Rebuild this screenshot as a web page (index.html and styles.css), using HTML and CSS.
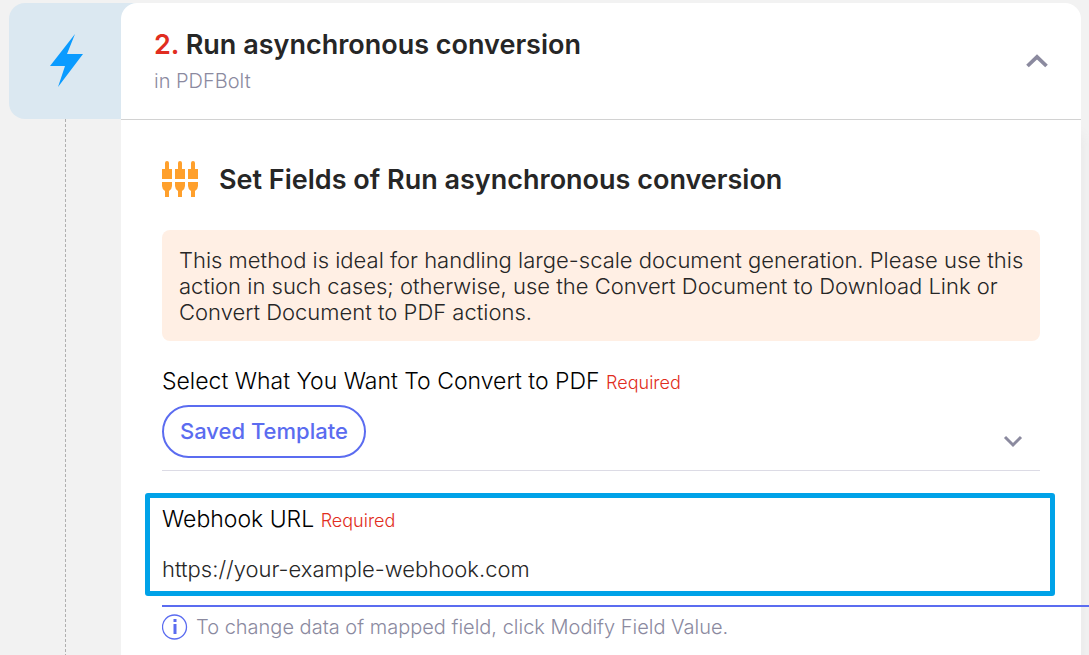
FILE: index.html
```html
<!DOCTYPE html>
<html lang="en">
<head>
  <meta charset="UTF-8">
  <meta name="viewport" content="width=device-width, initial-scale=1.0">
  <title>Run asynchronous conversion</title>
  <link rel="stylesheet" href="styles.css">
</head>
<body>
  <main class="step">
    <div class="rail">
      <div class="rail-icon">
        <svg width="34" height="54" viewBox="0 0 34 54" aria-hidden="true">
          <path d="M25 0 0 32h15L8 53 33 20H17z" fill="#0a9bff"/>
        </svg>
      </div>
      <div class="rail-line"></div>
    </div>

    <section class="card">
      <header class="card-header">
        <div>
          <h1 class="card-title"><span class="step-number">2.</span> Run asynchronous conversion</h1>
          <p class="card-subtitle">in PDFBolt</p>
        </div>
        <button class="icon-btn" type="button" aria-label="Collapse step">
          <svg width="22" height="14" viewBox="0 0 22 14" aria-hidden="true">
            <path d="M1.5 12 11 2.8 20.5 12" fill="none" stroke="#8b8a9f" stroke-width="3.8"/>
          </svg>
        </button>
      </header>

      <div class="card-body">
        <h2 class="section-title">
          <svg width="37" height="37" viewBox="0 0 37 37" fill="#ffa02c" aria-hidden="true">
            <path d="M0 8h3V2q0-2 2-2t2 2v6h3v10H0zM13 8h3V2q0-2 2-2t2 2v6h3v10H13zM26 8h3V2q0-2 2-2t2 2v6h3v10H26z"/>
            <path d="M0 21h10v4q0 3-3 5v6H3v-6q-3-2-3-5zM13 21h10v4q0 3-3 5v6h-4v-6q-3-2-3-5zM26 21h10v4q0 3-3 5v6h-4v-6q-3-2-3-5z"/>
          </svg>
          Set Fields of Run asynchronous conversion
        </h2>

        <p class="notice">
          This method is ideal for handling large-scale document generation. Please use this<br>
          action in such cases; otherwise, use the Convert Document to Download Link or<br>
          Convert Document to PDF actions.
        </p>

        <div class="field">
          <label class="field-label" for="source">Select What You Want To Convert to PDF <span class="required">Required</span></label>
          <div class="select-row">
            <button class="chip" id="source" type="button">Saved Template</button>
            <button class="icon-btn" type="button" aria-label="Open list">
              <svg width="20" height="13" viewBox="0 0 20 13" aria-hidden="true">
                <path d="M2 2 10 10 18 2" fill="none" stroke="#8b8a9f" stroke-width="3"/>
              </svg>
            </button>
          </div>
        </div>

        <div class="highlight">
          <label class="field-label" for="webhook">Webhook URL <span class="required">Required</span></label>
          <input class="text-input" id="webhook" type="text" value="https://your-example-webhook.com">
        </div>
        <div class="underline"></div>

        <p class="hint">
          <svg width="26" height="26" viewBox="0 0 26 26" aria-hidden="true">
            <circle cx="12.5" cy="13" r="12" fill="none" stroke="#5b6cf0" stroke-width="1.3"/>
            <path d="M11.5 10H14.5V20H11.5zM11.5 5H14.5V8H11.5z" fill="#5b6cf0"/>
          </svg>
          To change data of mapped field, click Modify Field Value.
        </p>
      </div>
    </section>
  </main>
</body>
</html>
```
FILE: styles.css
```css
* {
  margin: 0;
  padding: 0;
  box-sizing: border-box;
}

body {
  min-height: 100vh;
  background: #f2f2f2;
  color: #262626;
  font-family: Inter, "Noto Sans", sans-serif;
  font-weight: 300;
  overflow: hidden;
}

button,
input {
  font: inherit;
  background: none;
  border: none;
}

button {
  cursor: pointer;
}

.step {
  display: flex;
  min-height: 100vh;
  padding: 3px 8px 0 9px;
}

.rail {
  display: flex;
  flex-direction: column;
  flex: 0 0 112px;
}

/* runs on under the card so its rounded corner sits on blue */
.rail-icon {
  display: flex;
  align-items: center;
  height: 116px;
  margin-right: -20px;
  padding-left: 41px;
  background: #dbe8f1;
  border-radius: 16px 0 0 16px;
}

.rail-line {
  flex: 1;
  margin-left: 56px;
  background: repeating-linear-gradient(#b0b0b0 0 3px, transparent 3px 5px) 0 0 / 1px 100% no-repeat;
}

.card {
  position: relative;
  flex: 1;
  min-width: 0;
  background: #fff;
  border-radius: 16px 16px 0 0;
  box-shadow: 8px 124px 8px -4px #ebebeb;
}

.card-header {
  display: flex;
  align-items: center;
  justify-content: space-between;
  height: 117px;
  padding: 0 33px;
  border-bottom: 1px solid #d2d2d2;
}

.card-title {
  font-size: 27px;
  font-weight: 600;
  line-height: 32px;
}

.step-number {
  color: #e12d20;
}

.card-subtitle {
  margin-top: 8px;
  color: #8b8a9f;
  font-size: 20px;
  line-height: 24px;
}

.icon-btn {
  display: flex;
}

.card-body {
  padding: 41px 41px 0;
}

.section-title {
  display: flex;
  align-items: center;
  gap: 20px;
  font-size: 27px;
  font-weight: 600;
  line-height: 36px;
}

.notice {
  margin-top: 32px;
  padding: 17px 10px 16px 17px;
  background: #ffefe4;
  border-radius: 8px;
  font-size: 22px;
  line-height: 26px;
}

.field {
  margin-top: 24px;
  padding-bottom: 12px;
  border-bottom: 1px solid #dcdbe5;
}

.field-label {
  display: block;
  color: #000;
  font-size: 23px;
  line-height: 32px;
}

.required {
  color: #e12d20;
  font-size: 18px;
}

.select-row {
  display: flex;
  align-items: center;
  justify-content: space-between;
  margin-top: 6px;
  padding-right: 17px;
}

.select-row .icon-btn {
  margin-top: 20px;
}

.chip {
  height: 53px;
  padding: 0 16px 2px;
  border: 2px solid #5b6cf0;
  border-radius: 27px;
  color: #5b6cf0;
  font-size: 22px;
  font-weight: 500;
}

.highlight {
  margin: 22px -15px 0 -17px;
  padding: 5px 12px 8px;
  border: 5px solid #00a2e8;
  border-radius: 3px;
}

.text-input {
  display: block;
  width: 100%;
  margin-top: 18px;
  color: #262626;
  font-size: 22px;
  line-height: 28px;
  outline: none;
}

/* the focus line reaches past the card to the window edge */
.underline {
  height: 2px;
  margin: 9px -49px 0 0;
  background: #5b6cf0;
}

.hint {
  display: flex;
  align-items: center;
  gap: 8px;
  margin-top: 7px;
  color: #8b8a9f;
  font-size: 20px;
  line-height: 26px;
}
```
